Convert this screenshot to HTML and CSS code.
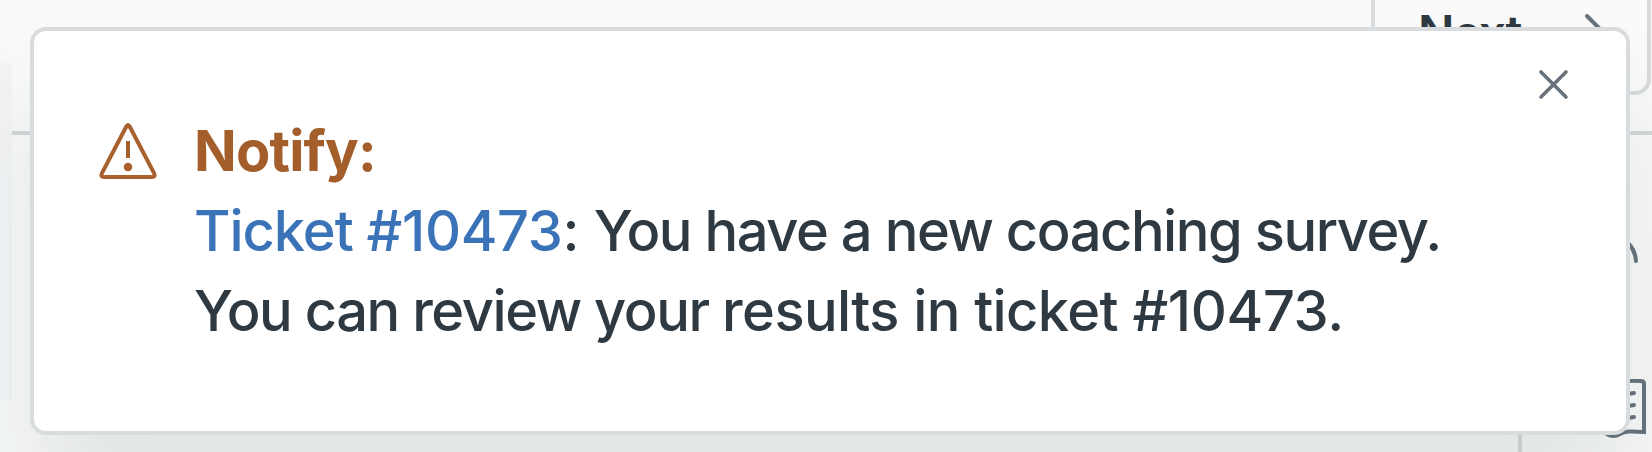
FILE: index.html
```
<!DOCTYPE html>
<html lang="en">
<head>
    <meta charset="UTF-8">
    <title>Notification</title>
    <link rel="stylesheet" href="styles.css">
</head>
<body>
    <div class="app">
        <div class="nav">
            <div class="nav-item"></div>
            <div class="nav-current"></div>
        </div>
        <div class="page">
            <div class="toolbar">
                <button class="next">
                    <span>Next</span>
                    <svg class="chevron" width="28" height="48" viewBox="0 0 28 48"><path d="M3 3l21 21L3 45"/></svg>
                </button>
            </div>
            <div class="workspace">
                <div class="ticket"></div>
                <div class="apps">
                    <svg class="user" width="64" height="64" viewBox="0 0 64 64">
                        <circle cx="32" cy="16" r="13"/>
                        <path d="M6 61C7 46 19 36 31 36s22 10 23 24"/>
                    </svg>
                    <svg class="book" width="68" height="64" viewBox="0 0 68 64">
                        <path d="M32 8C26 2 14 2 2 2v50c12 0 18 0 23 3q6 4 13 0c5-3 10-3 24-2V5q0-3-3-3C48 1 38 2 32 8z"/>
                        <path d="M46 15l6-1M46 27l6-1M46 39l6-1"/>
                    </svg>
                </div>
            </div>
        </div>
    </div>

    <div class="notification">
        <svg class="warning" width="64" height="64" viewBox="0 0 64 64">
            <path d="M29.3 5.500 5 52q-1.800 4 2 4h48q3.800 0 2-4L32.700 5.500q-1.700-3-3.400 0z"/>
            <path d="M31 20v17"/>
            <circle cx="31" cy="46" r="4.300"/>
        </svg>
        <div class="content">
            <div class="title">Notify:</div>
            <div><a class="link">Ticket <span class="number">#10473</span></a><span class="number">: </span>You have a new coaching survey.</div>
            <div>You can review your <span class="wide">results in ticket </span><span class="number">#10473.</span></div>
        </div>
        <button class="close">
            <svg width="32" height="32" viewBox="0 0 32 32"><path d="M3 3l25 25M28 3L3 28"/></svg>
        </button>
    </div>
</body>
</html>
```
FILE: styles.css
```
* { box-sizing: border-box; }
body { margin: 0; overflow: hidden; font-family: Inter, sans-serif; color: #2f3941; background: #f9faf9; }
button { border: 0; padding: 0; background: none; color: inherit; font-family: inherit; }
svg { fill: none; stroke: #68737d; stroke-width: 4; }

.app { display: flex; height: 452px; }
.nav { width: 12px; padding-top: 63px; background: #f8faf9; }
.nav-item { height: 112px; background: #f3f5f4; }
.nav-current { height: 225px; background: #f3f5f8; }
.page { flex: 1; display: flex; flex-direction: column; }

.toolbar { display: flex; justify-content: flex-end; align-items: flex-start; height: 135px;
           padding-right: 1px; border-bottom: 4px solid #d4d8da; }
.next { display: flex; align-items: flex-start; justify-content: space-between; width: 280px; height: 95px;
        padding: 3px 35px 0 43px; border: 4px solid #d8dcde; border-top: 0; border-radius: 0 0 16px 0;
        font-size: 48px; font-weight: 600; line-height: 60px; letter-spacing: -1.5px; }
.chevron { margin-top: 10px; stroke-linecap: round; }

.workspace { flex: 1; display: flex; }
.ticket { flex: 1; border-right: 4px solid #d8dcde; }
.apps { width: 130px; padding: 66px 0 0 60px; }
.apps svg { display: block; stroke-linecap: round; }
.book { margin-top: 114px; }

/* popup over the page */
.notification { position: absolute; top: 27px; left: 30px; width: 1600px; height: 408px;
                padding: 80px 160px; background: #fff; border: 4px solid #d8dcde; border-radius: 16px;
                box-shadow: 0 80px 112px rgba(23, 60, 60, 0.11); }
.content { font-size: 56px; font-weight: 450; line-height: 80px; letter-spacing: -1.45px; white-space: nowrap; }
.title { color: #a35e2b; font-weight: 700; letter-spacing: -0.8px; }
.link { color: #3b73b8; letter-spacing: -1.05px; }
.number { letter-spacing: -0.35px; }
.wide { letter-spacing: -0.6px; }
.warning { position: absolute; top: 90px; left: 63px; stroke: #a8612d; }
.warning circle { fill: #a8612d; stroke: none; }
.close { position: absolute; top: 38px; right: 56px; }
.close svg { display: block; stroke-width: 3.6; stroke-linecap: round; }
```
